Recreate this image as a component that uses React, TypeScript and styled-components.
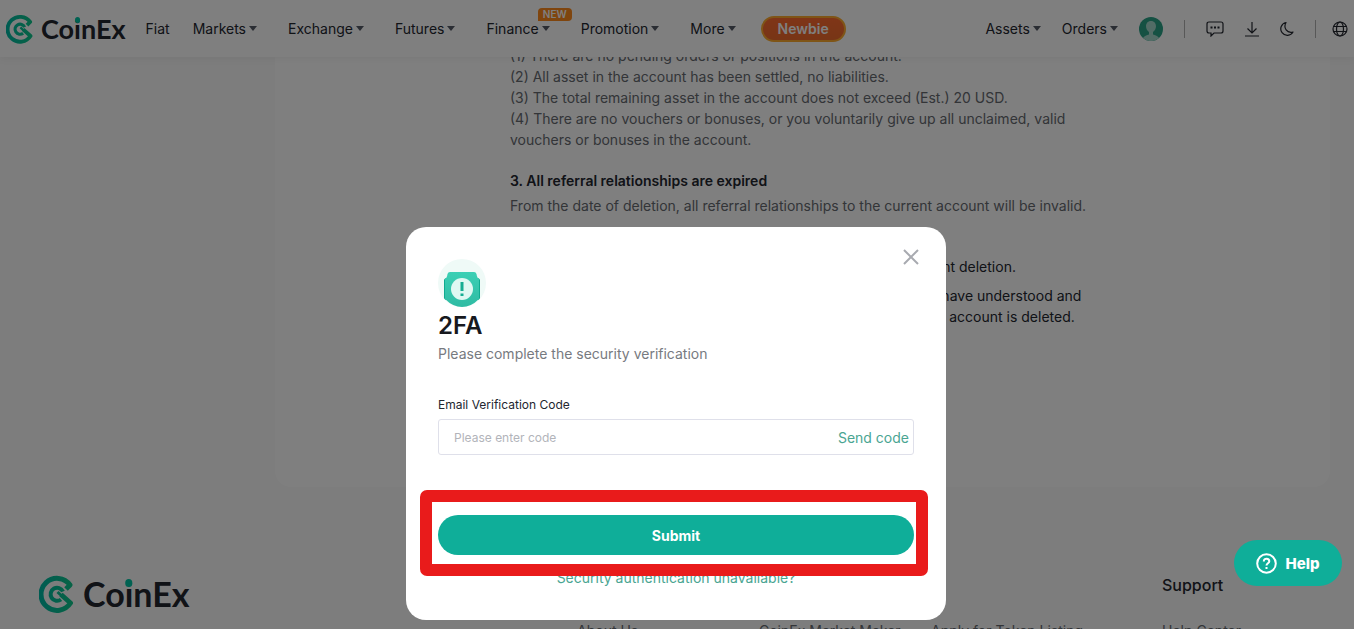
import React from "react";
import styled, { createGlobalStyle } from "styled-components";

const GlobalStyle = createGlobalStyle`
  *, *::before, *::after { box-sizing: border-box; }
  body {
    margin: 0;
    overflow: hidden;
    background: #fafafa;
    color: #23262f;
    font: 400 14px/21px Inter, "Liberation Sans", sans-serif;
  }
  button, input { font: inherit; }
  button { border: 0; padding: 0; background: none; color: inherit; cursor: pointer; }
  a { color: inherit; text-decoration: none; }
  h2, h3, p { margin: 0; padding: 0; }
`;

const Page = styled.div`
  height: 100vh;
  overflow: hidden;
`;

const Header = styled.header`
  position: relative;
  z-index: 2;
  display: flex;
  align-items: center;
  height: 57px;
  padding-left: 6px;
  background: #fff;
  box-shadow: 0 2px 8px rgba(0, 0, 0, 0.05);
`;

const LogoLink = styled.a<{ $large?: boolean }>`
  display: flex;
  align-items: center;
  gap: ${(p) => (p.$large ? 8 : 7)}px;
  font: 700 ${(p) => (p.$large ? 34 : 27)}px/1 Lato, sans-serif;
  color: #23262f;

  svg {
    width: ${(p) => (p.$large ? 36 : 28)}px;
    height: ${(p) => (p.$large ? 38 : 30)}px;
  }
`;

const DottedI = styled.span`
  position: relative;

  &::before {
    content: "";
    position: absolute;
    top: 0.18em;
    left: 50%;
    width: 0.22em;
    height: 0.22em;
    border-radius: 50%;
    background: #00c5a5;
    transform: translateX(-50%);
  }
`;

const NavLink = styled.a`
  position: relative;
  display: flex;
  align-items: center;
  gap: 3px;
`;

const Nav = styled.nav`
  display: flex;
  align-items: center;
  gap: 31px;
  margin-left: 20px;
  white-space: nowrap;

  ${NavLink}:first-child { margin-right: -8px; }
`;

const Caret = styled.i`
  border: 4px solid transparent;
  border-top: 5px solid #555a66;
  border-bottom: 0;
`;

const NewBadge = styled.span`
  position: absolute;
  right: -22px;
  top: -10px;
  padding: 0 5px;
  border-radius: 4px 4px 4px 0;
  background: #ff8a1c;
  color: #fff;
  font-size: 10px;
  font-weight: 600;
  line-height: 13px;
`;

const NewbieButton = styled.button`
  height: 26px;
  margin-left: 25px;
  padding: 0 15px;
  border: 2px solid #ffab2e;
  border-radius: 13px;
  background: linear-gradient(#ff6a30, #ef6a2c);
  color: #fff;
  font-weight: 600;
  line-height: 20px;
`;

const Tools = styled.div`
  display: flex;
  align-items: center;
  gap: 21px;
  margin-left: auto;
  padding-right: 6px;
`;

const IconButton = styled.button`
  display: flex;

  &:last-child { margin-left: -5px; }
`;

const Divider = styled.span`
  width: 1px;
  height: 18px;
  background: #b0b0b0;
`;

const Main = styled.main`
  padding: 0 24px 0 275px;
`;

const Panel = styled.article`
  display: flow-root;
  height: 430px;
  padding: 0 235px;
  border-radius: 0 0 16px 16px;
  background: #fff;
`;

const Terms = styled.div`
  margin-top: -12px;
  min-width: 590px;
`;

const Clause = styled.p<{ $dark?: boolean; $gap?: number }>`
  padding-top: ${(p) => p.$gap ?? 0}px;
  color: ${(p) => (p.$dark ? "#23262f" : "#666a70")};
`;

const ClauseTitle = styled.h3`
  padding-top: 20px;
  font-size: 14px;
  font-weight: 600;
  line-height: 21px;
`;

const Footer = styled.footer`
  display: grid;
  grid-template-columns: 538px 182px 172px 231px 1fr;
  align-items: start;
  padding: 88px 24px 0 39px;
  white-space: nowrap;
`;

const FooterColumn = styled.section`
  display: flex;
  flex-direction: column;
  gap: 25px;
  color: #666a70;

  h3 {
    min-height: 20px;
    color: #23262f;
    font-size: 16px;
    font-weight: 500;
    line-height: 20px;
  }
`;

const Overlay = styled.div`
  position: fixed;
  inset: 0;
  z-index: 10;
  display: flex;
  align-items: flex-end;
  justify-content: center;
  padding: 0 2px 9px 0;
  background: rgba(0, 0, 0, 0.5);
`;

const Dialog = styled.form`
  position: relative;
  display: flex;
  flex-direction: column;
  width: 540px;
  padding: 32px;
  border-radius: 20px;
  background: #fff;

  h2 {
    font-size: 24px;
    font-weight: 600;
    line-height: 32px;
    color: #17191e;
  }
`;

const CloseButton = styled.button`
  position: absolute;
  top: 22px;
  right: 27px;
  display: flex;
`;

const Hint = styled.p`
  line-height: 24px;
  color: #777a80;
`;

const FieldLabel = styled.label`
  margin-top: 29px;
  font-size: 12px;
  line-height: 20px;
`;

const CodeField = styled.div`
  display: flex;
  align-items: center;
  height: 36px;
  margin-top: 4px;
  padding: 0 4px 0 15px;
  border: 1px solid #dfe0ea;
  border-radius: 3px;

  input {
    flex: 1;
    min-width: 0;
    border: 0;
    padding: 0;
    outline: 0;
    font-size: 12px;
  }
  input::placeholder { color: #b2b4ba; }
  button { color: #4aa592; }
`;

const SubmitArea = styled.div`
  position: relative;
  margin-top: 60px;
`;

const SubmitButton = styled.button`
  width: 100%;
  height: 40px;
  border-radius: 20px;
  background: #0fae99;
  color: #fff;
  font-weight: 700;
`;

const Highlight = styled.span`
  position: absolute;
  z-index: 1;
  inset: -25px -14px -21px -18px;
  border: 12px solid #e91b1b;
  border-radius: 7px;
  pointer-events: none;
`;

const RecoveryLink = styled.a`
  align-self: center;
  margin-top: 12px;
  color: #4aa592;
`;

const HelpButton = styled.button`
  position: fixed;
  z-index: 11;
  right: 12px;
  bottom: 43px;
  display: flex;
  align-items: center;
  justify-content: center;
  gap: 8px;
  width: 108px;
  height: 46px;
  border-radius: 23px;
  background: #0fae99;
  color: #fff;
  font-size: 15px;
  font-weight: 800;
`;

function Logo({ large }: { large?: boolean }) {
  const id = large ? "mark-large" : "mark-small";
  return (
    <LogoLink href="#" $large={large}>
      <svg viewBox="0 0 36 38" fill="none" aria-hidden="true">
        <defs>
          <linearGradient id={id} x1="0" y1="0" x2="36" y2="0" gradientUnits="userSpaceOnUse">
            <stop stopColor="#00b8a5" />
            <stop offset="1" stopColor="#10c88a" />
          </linearGradient>
        </defs>
        <g stroke={`url(#${id})`} strokeLinejoin="round">
          <path d="M27 14 31 10A16 16 0 1 0 31.500 28L22 19.500" strokeWidth="5" />
          <path d="M24 16.500A6.500 6.500 0 1 0 22 24.500" strokeWidth="4" />
          <path d="M24 22 18.500 17" strokeWidth="3" />
        </g>
      </svg>
      <span>Co<DottedI>i</DottedI>nEx</span>
    </LogoLink>
  );
}

const Item = ({ text, badge }: { text: string; badge?: boolean }) => (
  <NavLink href="#">
    {text}
    <Caret />
    {badge && <NewBadge>NEW</NewBadge>}
  </NavLink>
);

export default function App() {
  return (
    <>
      <GlobalStyle />
      <Page>
        <Header>
          <Logo />
          <Nav>
            <NavLink href="#">Fiat</NavLink>
            <Item text="Markets" />
            <Item text="Exchange" />
            <Item text="Futures" />
            <Item text="Finance" badge />
            <Item text="Promotion" />
            <Item text="More" />
          </Nav>
          <NewbieButton>Newbie</NewbieButton>
          <Tools>
            <Item text="Assets" />
            <Item text="Orders" />
            <IconButton aria-label="Account">
              <svg width="24" height="24" viewBox="0 0 24 24">
                <circle cx="12" cy="12" r="12" fill="#2aa287" />
                <path d="M4 21c1-2 4-3 6-3.500v-2.500C5.500 12 6 4 12 4s6.500 8 2 11v2.500c2 .5 5 1.500 6 3.500a12 12 0 0 1-16 0Z" fill="#a5d8cc" />
              </svg>
            </IconButton>
            <Divider />
            <IconButton aria-label="Messages">
              <svg width="18" height="16" viewBox="0 0 18 16" fill="none" stroke="#23262f" strokeWidth="1.200">
                <path d="M3 1h12q2 0 2 2v7q0 2-2 2H8l-3 3v-3H3q-2 0-2-2V3q0-2 2-2Z" />
                <path d="M4.500 6.500h2m1.500 0h2m1.500 0h2" strokeWidth="2" />
              </svg>
            </IconButton>
            <IconButton aria-label="Download">
              <svg width="14" height="16" viewBox="0 0 14 16" fill="none" stroke="#23262f" strokeWidth="1.200">
                <path d="M7 1v11M2.500 7.500 7 12l4.500-4.500M0 15h14" />
              </svg>
            </IconButton>
            <IconButton aria-label="Dark mode">
              <svg width="14" height="16" viewBox="0 0 14 16" fill="none" stroke="#23262f" strokeWidth="1.200">
                <path d="M6 1.500a6.500 6.500 0 1 0 7 9.500C7 12.500 3 7 6 1.500Z" strokeLinejoin="round" />
              </svg>
            </IconButton>
            <Divider />
            <IconButton aria-label="Language">
              <svg width="16" height="16" viewBox="0 0 16 16" fill="none" stroke="#23262f" strokeWidth="1.200">
                <circle cx="8" cy="8" r="7" />
                <ellipse cx="8" cy="8" rx="3.500" ry="7" />
                <path d="M1.500 5.500h13M1.500 10.500h13" />
              </svg>
            </IconButton>
          </Tools>
        </Header>
        <Main>
          <Panel>
            <Terms>
              <Clause>(1) There are no pending orders or positions in the account.</Clause>
              <Clause>(2) All asset in the account has been settled, no liabilities.</Clause>
              <Clause>(3) The total remaining asset in the account does not exceed (Est.) 20 USD.</Clause>
              <Clause>
                (4) There are no vouchers or bonuses, or you voluntarily give up all unclaimed, valid vouchers or
                bonuses in the account.
              </Clause>
              <ClauseTitle>3. All referral relationships are expired</ClauseTitle>
              <Clause $gap={4}>
                From the date of deletion, all referral relationships to the current account will be invalid.
              </Clause>
              <Clause $dark $gap={40}>
                Please make sure that you have read all of the rules before account deletion.
              </Clause>
              <Clause $dark $gap={8}>
                By continuing through the operation, you are confirming that you have understood and
                acknowledged that none of its data can ever be restored once the account is deleted.
              </Clause>
            </Terms>
          </Panel>
        </Main>
        <Footer>
          <Logo large />
          <FooterColumn><h3 /><a href="#">About Us</a></FooterColumn>
          <FooterColumn><h3 /><a href="#">CoinEx Market Maker</a></FooterColumn>
          <FooterColumn><h3 /><a href="#">Apply for Token Listing</a></FooterColumn>
          <FooterColumn><h3>Support</h3><a href="#">Help Center</a></FooterColumn>
        </Footer>
      </Page>
      <Overlay>
        <Dialog role="dialog" aria-labelledby="dialog-title" onSubmit={(e) => e.preventDefault()}>
          <CloseButton type="button" aria-label="Close">
            <svg width="16" height="16" viewBox="0 0 16 16" stroke="#a8aab0" strokeWidth="2">
              <path d="m1 1 14 14M15 1 1 15" />
            </svg>
          </CloseButton>
          <svg width="50" height="51" viewBox="0 0 50 51" aria-hidden="true">
            <defs>
              <linearGradient id="shield" x1="0" y1="0" x2="0" y2="1">
                <stop stopColor="#3bd0b5" />
                <stop offset="1" stopColor="#2fbba3" />
              </linearGradient>
            </defs>
            <circle cx="24" cy="24" r="24" fill="#effaf7" />
            <path d="M6 21q0-1 2-2h32q2 1 2 2v18q0 1-2 2H8q-2-1-2-2Z" fill="#10ab90" />
            <path d="M12 13h24q2 0 2.500 2 .5 4 2.500 5v20q-8 8-17 8T7 40V20q2-1 2.500-5 .5-2 2.500-2Z" fill="url(#shield)" />
            <circle cx="24" cy="30" r="11" fill="#dff8f2" />
            <path d="M24 23v9m0 2.500V37" stroke="#16ad92" strokeWidth="3" />
          </svg>
          <h2 id="dialog-title">2FA</h2>
          <Hint>Please complete the security verification</Hint>
          <FieldLabel htmlFor="code">Email Verification Code</FieldLabel>
          <CodeField>
            <input id="code" placeholder="Please enter code" />
            <button type="button">Send code</button>
          </CodeField>
          <SubmitArea>
            <SubmitButton type="submit">Submit</SubmitButton>
            <Highlight />
          </SubmitArea>
          <RecoveryLink href="#">Security authentication unavailable?</RecoveryLink>
        </Dialog>
      </Overlay>
      <HelpButton>
        <svg width="21" height="21" viewBox="0 0 21 21" fill="none" stroke="#fff" strokeWidth="2">
          <circle cx="10.500" cy="10.500" r="9.300" />
          <path d="M7.800 8.500c0-4 5.500-3.500 5.500-.3 0 2-2.800 2-2.800 4.300m0 1.500v2" />
        </svg>
        Help
      </HelpButton>
    </>
  );
}
